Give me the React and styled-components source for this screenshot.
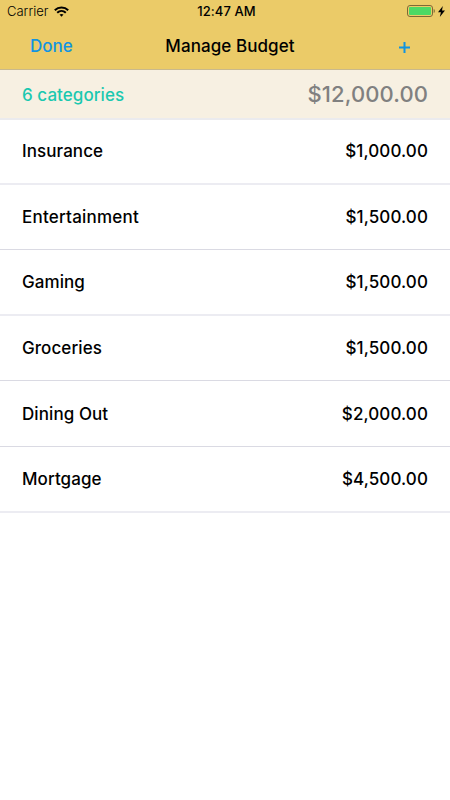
import React from "react";
import styled, { createGlobalStyle } from "styled-components";

const GlobalStyle = createGlobalStyle`
  * {
    box-sizing: border-box;
  }

  body {
    margin: 0;
    background-color: #fff;
    font-family: Inter, "Liberation Sans", sans-serif;
    color: #000;
  }
`;

const Screen = styled.div`
  width: 450px;
  height: 800px;
  background-color: #fff;
  overflow: hidden;
`;

const Header = styled.header`
  height: 70px;
  background-color: #ebcb68;
  border-bottom: 1px solid #c9b98c;
`;

const StatusBar = styled.div`
  height: 23px;
  padding: 0 5px 0 7px;
  display: grid;
  grid-template-columns: 1fr auto 1fr;
  align-items: center;
  font-size: 13px;
  line-height: 23px;
`;

const Carrier = styled.div`
  display: flex;
  align-items: center;
  gap: 6px;
  font-weight: 300;
`;

const Clock = styled.span`
  padding-left: 1px;
  font-weight: 500;
  letter-spacing: 0.1px;
`;

const Power = styled.div`
  display: flex;
  align-items: center;
  justify-content: flex-end;
  gap: 3px;
  padding-bottom: 1px;
`;

const NavBar = styled.nav`
  height: 46px;
  padding: 0 20px 0 30px;
  display: grid;
  grid-template-columns: 1fr auto 1fr;
  align-items: center;
`;

const NavButton = styled.button`
  justify-self: ${({ $align }) => $align};
  display: flex;
  padding: 0;
  border: 0;
  background: none;
  font: 500 17px Inter, sans-serif;
  color: #1194e0;
`;

const AddButton = styled(NavButton)`
  margin: 2px 20px 0 0;
`;

const Title = styled.h1`
  margin: 0;
  font-size: 17px;
  font-weight: 500;
  letter-spacing: 0.08px;
`;

const Summary = styled.section`
  height: 50px;
  padding: 0 22px;
  display: flex;
  align-items: center;
  justify-content: space-between;
  background-color: #f7f0e2;
  border-bottom: 2px solid #ebebee;
`;

const Count = styled.span`
  padding-top: 2px;
  font-size: 17px;
  font-weight: 500;
  letter-spacing: 0.06px;
  color: #1bc8b0;
`;

const Total = styled.span`
  font-size: 22px;
  font-weight: 500;
  letter-spacing: 0.1px;
  color: #808080;
`;

const List = styled.ul`
  margin: 0;
  padding: 0;
  list-style: none;
`;

const Row = styled.li`
  height: ${({ $height }) => $height}px;
  padding: 0 22px;
  display: flex;
  align-items: center;
  justify-content: space-between;
  border-bottom: ${({ $soft }) => ($soft ? "2px solid #ececf2" : "1px solid #dadae3")};
  font-size: 17px;
  font-weight: 500;

  &:first-child {
    padding-bottom: 1px;
  }
`;

const Name = styled.span`
  letter-spacing: ${({ $tracking }) => $tracking || 0.08}px;
`;

const Amount = styled.span`
  letter-spacing: 0.1px;
`;

const categories = [
  { name: "Insurance", amount: "$1,000.00", height: 65, soft: true },
  { name: "Entertainment", amount: "$1,500.00", height: 65, tracking: 0.22 },
  { name: "Gaming", amount: "$1,500.00", height: 66, soft: true },
  { name: "Groceries", amount: "$1,500.00", height: 65 },
  { name: "Dining Out", amount: "$2,000.00", height: 66 },
  { name: "Mortgage", amount: "$4,500.00", height: 66, soft: true },
];

const WifiIcon = () => (
  <svg width="15" height="11" viewBox="0 0 15 11" fill="none" stroke="#000" strokeWidth="2">
    <path d="M0.8 4.2C4.6 0.5 10.4 0.5 14.2 4.2" />
    <path d="M3.2 6.7C5.7 4.4 9.3 4.4 11.8 6.7" />
    <path d="M5.5 8.6C6.7 7.8 8.3 7.8 9.5 8.6L7.5 10.7Z" fill="#000" stroke="none" />
  </svg>
);

const BatteryIcon = () => (
  <svg width="28" height="12" viewBox="0 0 28 12">
    <rect x="0.5" y="0.5" width="25" height="11" rx="2.5" fill="none" stroke="#7d6937" />
    <rect x="2" y="2" width="22" height="8" rx="1" fill="#4cd964" />
    <path d="M26.7 4C28.2 4.6 28.2 7.4 26.7 8Z" fill="#7d6937" />
  </svg>
);

const BoltIcon = () => (
  <svg width="7" height="11" viewBox="0 0 7 11">
    <path d="M4.8 0L0 6.2H2.9L1.8 11L7 4.6H4Z" fill="#000" />
  </svg>
);

const PlusIcon = () => (
  <svg width="11" height="11" viewBox="0 0 11 11" stroke="#1194e0" strokeWidth="2">
    <path d="M5.5 0V11M0 5.5H11" />
  </svg>
);

const App = () => {
  return (
    <Screen>
      <GlobalStyle />
      <Header>
        <StatusBar>
          <Carrier>
            Carrier
            <WifiIcon />
          </Carrier>
          <Clock>12:47 AM</Clock>
          <Power>
            <BatteryIcon />
            <BoltIcon />
          </Power>
        </StatusBar>
        <NavBar>
          <NavButton $align="start">Done</NavButton>
          <Title>Manage Budget</Title>
          <AddButton $align="end" aria-label="Add category">
            <PlusIcon />
          </AddButton>
        </NavBar>
      </Header>
      <Summary>
        <Count>{categories.length} categories</Count>
        <Total>$12,000.00</Total>
      </Summary>
      <List>
        {categories.map((category) => (
          <Row key={category.name} $height={category.height} $soft={category.soft}>
            <Name $tracking={category.tracking}>{category.name}</Name>
            <Amount>{category.amount}</Amount>
          </Row>
        ))}
      </List>
    </Screen>
  );
};

export default App;
